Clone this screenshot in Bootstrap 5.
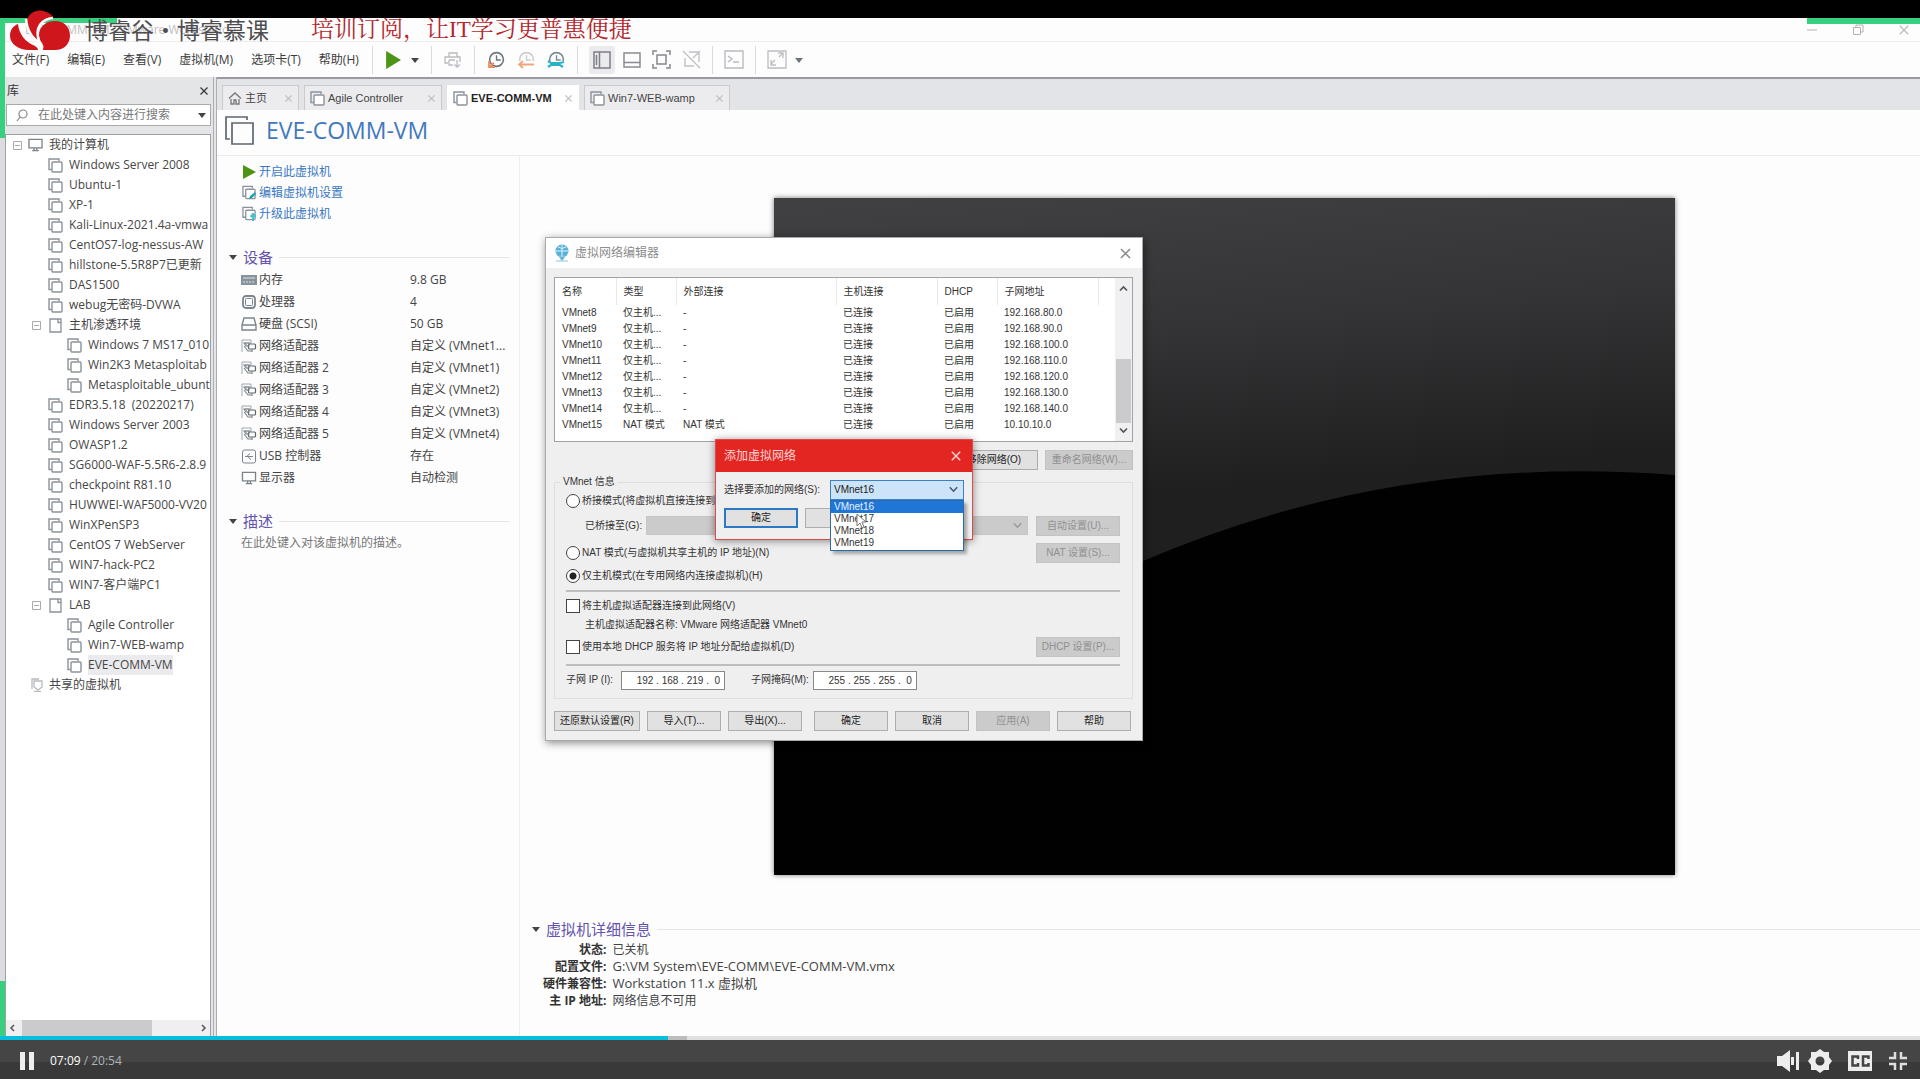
<!DOCTYPE html>
<html lang="zh-CN">
<head>
<meta charset="utf-8">
<meta name="viewport" content="width=device-width, initial-scale=1">
<title>EVE-COMM-VM - VMware Workstation</title>
<link href="https://cdn.jsdelivr.net/npm/bootstrap@5.3.0/dist/css/bootstrap.min.css" rel="stylesheet">
<script defer src="https://cdn.jsdelivr.net/npm/bootstrap@5.3.0/dist/js/bootstrap.bundle.min.js"></script>
<style>
body{font:12px/20px "Open Sans","Noto Sans CJK SC",sans-serif;color:#444;background:#000;overflow-x:hidden}
svg{display:block;flex:none}
button,input,select{font:inherit;color:inherit}
.plain{background:none;border:0;padding:0}
.stage{margin-top:18px;background:#fdfdfd}
.edge{width:5px;flex:none;background:#dcdde0}
.edge-top{height:120px}.edge-bot{height:55px}
.green{background:#37d07e}
.green-tl{left:0;top:0;width:117px;height:5px}
.green-tr{right:0;top:0;width:113px;height:6px}
.titlebar{height:24px;border-bottom:1px solid #ececec;color:#c3bfc1;padding-left:20px}
.winbtns{gap:34px;padding-right:10px}
.brand{left:10px;top:-8px}
.brand-name{left:85px;top:-7px;font:23px/36px "Noto Sans CJK SC",sans-serif;color:#4e4e50}
.slogan{left:311px;top:-3px;font:23px/30px "Liberation Serif","Noto Serif CJK SC","Noto Sans CJK SC",serif;color:#b3272d}
.menubar{height:35px;padding-left:7px}
.menus{gap:18px}
.menubar a{color:#3c3c3c;text-decoration:none}
.tool{gap:12px;margin-left:13px}
.tool-b{gap:11px}
.run-gap{gap:10px}
.vsep{width:1px;height:28px;background:#dcd8dc}
.pressed{background:#ebebee;border-radius:3px;padding:5px 4px}
.lib{width:212px;flex:none;background:#e4e5e7;border-right:4px double #aeadb3}
.lib-head{height:27px;padding:0 4px 0 2px;color:#333}
.lib-search{height:22px;border:1px solid #aaa;background:#fff;padding:0 4px 0 9px;margin:0 2px 8px 1px}
.lib-search input{border:0;outline:0;background:none;width:150px;padding:0 0 0 10px;flex:1;min-width:0}
.lib-search input::placeholder{color:#777;opacity:1}
.treebox{border:1px solid #9fa0a5;border-bottom:0;margin-right:2px;background:#fff;overflow:hidden}
.tree{list-style:none;margin:0;padding:0;white-space:nowrap;color:#464646}
.tree li{height:20px;display:flex;align-items:center;gap:6px;padding-left:42px;overflow:hidden}
.tree .lv0{padding-left:7px;gap:5px}
.tree .lvf{padding-left:26px}
.tree .lvf svg:first-child{margin-right:1px}
.tree .lv2{padding-left:61px}
.tree .shared{padding-left:25px;gap:6px}
.tree .sel span{background:#ebebed}
.hscroll{height:16px;background:#f0eef1;padding:0 3px}
.hthumb{width:130px;height:16px;background:#cbcacd;margin-left:7px}
.tabs{height:33px;background:#e3e4e7;border-top:2px solid #9b9b9f;padding:6px 0 0 5px;gap:5px;font:11px/24px "Liberation Sans","Noto Sans CJK SC",sans-serif}
.tabx{height:25px;background:#ececef;border:1px solid #c9c9ce;border-bottom:0;padding:0 5px;gap:3px;color:#444;border-radius:0}
.tabx.cur{background:#fff;border-color:#fff;font-weight:700;color:#222}
.tabx .x{margin-left:auto}
.t1{width:77px}.t2{width:138px}.t3{width:132px}.t4{width:146px}
.vmhead{height:46px;border-bottom:1px solid #ececec;padding:0 0 5px 8px;gap:12px}
.vmhead h1{font-size:23px;line-height:30px;margin:0;color:#4178be;font-weight:400}
.mid{width:303px;flex:none;border-right:1px solid #eee;padding:5px 9px 0 12px}
.cmds{padding-left:13px;margin-bottom:21px}
.cmds a{display:flex;align-items:center;gap:3px;height:21px;text-decoration:none;color:#3a78c3}
.sec{display:flex;align-items:center;gap:6px;height:24px;margin:0;color:#6454ae;font-size:15px;font-weight:400}
.sec::after{content:"";flex:1;height:1px;background:#e6e6ea}
.dev{margin:0 0 20px;padding-left:12px}
.dev div{display:flex;height:22px;align-items:center}
.dev dt{font-weight:400;width:169px;display:flex;align-items:center;gap:2px}
.dev dd{margin:0;white-space:nowrap}
.desc{padding-left:12px;color:#777}
.rightpane{padding:42px 0 0 0}
.screenwrap{padding-left:8px}
.screen{width:65%;max-width:901px;aspect-ratio:901/677;box-shadow:0 0 5px #777}
.screen svg{width:100%;height:100%}
.detail{padding:42px 0 0 12px}
.detail table{line-height:17px;margin-left:11px}
.detail th{text-align:right;padding:0 6px 0 0;color:#333}
.detail td{padding:0}
.detail .lat{font-size:13px}
/* 虚拟网络编辑器 */
.dlg{left:25px;top:81px;width:598px;background:#f0eff0;border:1px solid #aaa;box-shadow:1px 2px 8px rgba(0,0,0,.45);font:10px/16px "Liberation Sans","Noto Sans CJK SC",sans-serif;color:#333;padding-bottom:9px}
.dlg-title{height:30px;background:#fff;padding:0 10px 0 9px;font-size:12px;color:#8d8d8d;gap:6px}
.dlg-body{padding:9px 9px 0 8px}
.gridbox{height:165px;border:1px solid #a2a2a6;background:#fff}
.nets{width:543px;table-layout:fixed;line-height:16px}
.nets th{font-weight:400;height:27px;border-right:1px solid #e8e8e8}
.nets th,.nets td{padding:0 0 0 7px;white-space:nowrap}
.vscroll{width:17px;background:#f0eff1;padding:7px 0}
.vthumb{height:64px;width:15px;background:#cbcacd}
.wbtn{height:20px;border:1px solid #adadad;background:#e2e1e2;padding:0;line-height:16px;text-align:center;color:#222;width:74px}
.wbtn:disabled{background:#cbcbcc;border-color:#c3c3c3;color:#909090}
.w88{width:88px}.w84{width:84px}.w86{width:86px}
.netinfo{border:1px solid #dedede;margin:4px 0 12px;padding:0 12px 7px 11px}
.netinfo legend{float:none;width:auto;font:inherit;margin:0 0 0 -6px;padding:0 3px;background:#f0eff0}
.ln{display:flex;align-items:center}
.ln label{margin-left:2px}
.ck{appearance:none;width:14px;height:14px;border:1px solid #444;background:#fff;margin:0;flex:none}
.rd{border-radius:50%}
.rd:checked{background:radial-gradient(#222 0 3px,#fff 4px)}
.h22{height:22px}.h20{height:20px}.h27{height:27px}
.ind{padding-left:19px}
.dimsel{appearance:none;height:19px;border:1px solid #c6c6c6;background:#cbcbcc;border-radius:0}
.rule{height:2px;background:#bdbdbf;margin:4px 0 3px}
.ipbox{height:19px;border:1px solid #888;background:#fff;width:104px;padding:0 4px;text-align:right}
.foot{gap:7px}
.foot .gap{margin-right:5px}
/* 添加虚拟网络 */
.addnet{left:169px;top:201px;width:258px;height:101px;background:#f0eff0;border:1px solid #e0494b;box-shadow:0 1px 8px rgba(0,0,0,.45)}
.addnet-title{height:32px;background:#e42623;color:#fbd5d5;font-size:12px;padding:0 10px 0 8px}
.pick{appearance:none;height:20px;width:134px;border:1px solid #3d81c4;background:#cce4f9;border-radius:0;padding:0 3px;color:#222}
.okbtn{border:2px solid #2b78c5}
.picklist{right:8px;top:60px;width:134px;border:1px solid #2b6ca8;background:#fff;box-shadow:3px 3px 3px rgba(0,0,0,.3);line-height:12px;margin:0;padding:0 0 1px;list-style:none}
.picklist li{padding-left:3px}
.picklist .on{background:#1f76d6;color:#e8f3ff}
.cursor{left:140px;top:73px}
.chev{right:6px;top:6px;pointer-events:none}
/* 播放器 */
.prog{height:4px;border-radius:0;background:#dfe0df}
.player{height:39px;background:linear-gradient(#454545 0 22px,#393939 22px);color:#fff;padding:2px 12px 0 20px;font:12px/20px "Open Sans",sans-serif}
.player .tot{color:#aeb4b9}
</style>
</head>
<body class="d-flex flex-column min-vh-100">
<svg width="0" height="0" class="position-absolute" aria-hidden="true">
 <symbol id="vm" viewBox="0 0 15 15"><path d="M3.5 11.5H1V1h10v2" fill="none" stroke="#8b929b" stroke-width="1.4"/><rect x="4" y="4" width="10" height="10" rx="1" fill="#fff" stroke="#8b929b" stroke-width="1.4"/></symbol>
 <symbol id="folder" viewBox="0 0 15 15"><path d="M2 1h8v3.500h3V14H2zM10 1h3v3.500" fill="#fff" stroke="#8b929b" stroke-width="1.300"/></symbol>
 <symbol id="minus" viewBox="0 0 9 9"><path d="M.5.500h8v8h-8zM2 4.500h5" fill="#fff" stroke="#aaa"/></symbol>
 <symbol id="x" viewBox="0 0 10 10"><path d="M1.500 1.500l7 7M8.500 1.500l-7 7" fill="none" stroke="currentColor" stroke-width="1.200"/></symbol>
 <symbol id="car" viewBox="0 0 8 6"><path d="M0 1h8L4 6z" fill="currentColor"/></symbol>
 <symbol id="play" viewBox="0 0 14 14"><path d="M1 0l13 7-13 7z" fill="#4b9414"/></symbol>
 <symbol id="net" viewBox="0 0 16 15"><path d="M1 13V1h9v3H4l4 5" fill="none" stroke="#a1a7ad"/><rect x="7.500" y="5" width="7" height="5" rx="1" fill="#fff" stroke="#5c6670" stroke-width="1.200"/><path d="M11 10v3M3 4h5v3H5zM3 7l4 5h4" fill="none" stroke="#7b848c" stroke-width="1.100"/></symbol>
 <symbol id="mon" viewBox="0 0 17 15"><path d="M1.500 1.500h14v9h-14zM5 13.500h7M7 11v2M10 11v2" fill="none" stroke="#7b828a" stroke-width="1.400"/></symbol>
 <symbol id="clock" viewBox="0 0 17 17"><circle cx="9" cy="8" r="6.500" fill="none" stroke="currentColor" stroke-width="1.500"/><path d="M9 4v4.500h4" fill="none" stroke="currentColor" stroke-width="1.300"/></symbol>
 <symbol id="down" viewBox="0 0 8 6"><path d="M.7 1L4 4.500 7.300 1" fill="none" stroke="currentColor" stroke-width="1.300"/></symbol>
</svg>

<main class="stage flex-grow-1 d-flex position-relative">
 <div class="edge d-flex flex-column justify-content-between"><i class="edge-top green"></i><i class="edge-bot green"></i></div>
 <div class="flex-grow-1 d-flex flex-column">
  <div class="titlebar d-flex align-items-center justify-content-between"><span>EVE-COMM-VM - VMware Workstation</span>
   <div class="winbtns d-flex align-items-center"><button class="plain" aria-label="最小化"><svg width="12" height="12"><path d="M1 6h10" stroke="#b9adad"/></svg></button><button class="plain" aria-label="还原"><svg width="12" height="12"><path d="M1.500 3.500h7v7h-7zM4 3V1h7v7H9" fill="none" stroke="#b9adad"/></svg></button><button class="plain" aria-label="关闭"><svg width="12" height="12"><use href="#x"/></svg></button></div>
  </div>
  <nav class="menubar d-flex align-items-center">
   <div class="menus d-flex"><a href="#">文件(F)</a><a href="#">编辑(E)</a><a href="#">查看(V)</a><a href="#">虚拟机(M)</a><a href="#">选项卡(T)</a><a href="#">帮助(H)</a></div>
   <div class="tool d-flex align-items-center">
    <i class="vsep"></i>
    <button class="plain d-flex align-items-center run-gap" aria-label="开启"><svg width="16" height="18" viewBox="0 0 14 14" preserveAspectRatio="none"><use href="#play"/></svg><svg width="8" height="6"><use href="#car"/></svg></button>
    <i class="vsep"></i>
    <button class="plain" aria-label="发送"><svg width="18" height="18" fill="none" stroke="#b9bcc2" stroke-width="1.300"><path d="M5 6V2h8v4M4 12H1V6h15v5M5 9h6M5 9v5h4M13 9v7M10.500 13.500L13 16l3-2.500"/></svg></button>
    <i class="vsep"></i>
    <button class="plain text-secondary" aria-label="快照"><svg width="18" height="18"><use href="#clock"/><path d="M2 10v6h6M2 16l5-4" fill="none" stroke="#eb8f60" stroke-width="1.800"/></svg></button>
    <button class="plain" aria-label="恢复快照"><svg width="18" height="18"><g color="#ccc"><use href="#clock"/></g><path d="M0 10h18v8H0z" fill="#fff"/><path d="M2 13.500h15M6 10l-4 3.500L6 17" fill="none" stroke="#f2a47c" stroke-width="1.800"/></svg></button>
    <button class="plain" aria-label="管理快照"><svg width="18" height="18"><g color="#7d8b97"><use href="#clock"/></g><path d="M0 10h18v8H0z" fill="#fff"/><path d="M1 10l3 2h9l4-1M1 16l3-2h9l3 2" fill="none" stroke="#29b2c6" stroke-width="2.200"/></svg></button>
    <div class="tool-b d-flex align-items-center">
    <i class="vsep"></i>
    <div class="d-flex align-items-center gap-2">
    <button class="plain pressed" aria-label="显示库"><svg width="18" height="18" fill="none" stroke="#7d7f88" stroke-width="1.500"><path d="M1 1h16v16H1zM6.500 1v16M3.500 4v10"/></svg></button>
    <button class="plain" aria-label="缩略图"><svg width="18" height="18" fill="none" stroke="#8a8c94" stroke-width="1.500"><path d="M1 2h16v14H1zM1 11.500h16"/></svg></button></div>
    <button class="plain" aria-label="全屏"><svg width="19" height="19" fill="none" stroke="#85878f" stroke-width="1.500"><path d="M1 5V1h4M14 1h4v4M18 14v4h-4M5 18H1v-4M5 5h9v9H5z"/></svg></button>
    <button class="plain" aria-label="Unity"><svg width="19" height="19" fill="none" stroke="#c0c1c6" stroke-width="1.400"><path d="M1 1l17 17M7 2h10v10M12 16H3V8M11 8l7-7"/></svg></button>
    <i class="vsep"></i>
    <button class="plain" aria-label="控制台"><svg width="20" height="19" fill="none" stroke="#b9bbc1" stroke-width="1.400"><path d="M1 1h18v17H1zM4 6l4 3-4 3M9 12h6"/></svg></button>
    <i class="vsep"></i>
    <button class="plain d-flex align-items-center gap-2 text-secondary" aria-label="自由拉伸"><svg width="20" height="19" fill="none" stroke="#bcbdc2" stroke-width="1.300"><path d="M1 1h18v17H1zM4 14l4-4M12 7l4-4M4 10v5h5M11 3h5v5"/></svg><svg width="8" height="6"><use href="#car"/></svg></button>
    </div>
   </div>
  </nav>

  <div class="flex-grow-1 d-flex">
   <aside class="lib d-flex flex-column">
    <div class="lib-head d-flex justify-content-between align-items-center"><span>库</span><button class="plain" aria-label="关闭库"><svg width="10" height="10"><use href="#x"/></svg></button></div>
    <div class="lib-search d-flex align-items-center"><svg width="12" height="13" fill="none" stroke="#888" stroke-width="1.200"><circle cx="7" cy="5" r="4"/><path d="M4 8l-3 4"/></svg><input aria-label="搜索" placeholder="在此处键入内容进行搜索"><svg width="8" height="6"><use href="#car"/></svg></div>
    <div class="treebox flex-grow-1 d-flex flex-column justify-content-between">
    <ul class="tree">
     <li class="lv0"><svg width="9" height="9"><use href="#minus"/></svg><svg width="17" height="14"><use href="#mon"/></svg><span>我的计算机</span></li>
     <li><svg width="15" height="15"><use href="#vm"/></svg><span>Windows Server 2008</span></li>
     <li><svg width="15" height="15"><use href="#vm"/></svg><span>Ubuntu-1</span></li>
     <li><svg width="15" height="15"><use href="#vm"/></svg><span>XP-1</span></li>
     <li><svg width="15" height="15"><use href="#vm"/></svg><span>Kali-Linux-2021.4a-vmwa</span></li>
     <li><svg width="15" height="15"><use href="#vm"/></svg><span>CentOS7-log-nessus-AW</span></li>
     <li><svg width="15" height="15"><use href="#vm"/></svg><span>hillstone-5.5R8P7已更新</span></li>
     <li><svg width="15" height="15"><use href="#vm"/></svg><span>DAS1500</span></li>
     <li><svg width="15" height="15"><use href="#vm"/></svg><span>webug无密码-DVWA</span></li>
     <li class="lvf"><svg width="9" height="9"><use href="#minus"/></svg><svg width="15" height="15"><use href="#folder"/></svg><span>主机渗透环境</span></li>
     <li class="lv2"><svg width="15" height="15"><use href="#vm"/></svg><span>Windows 7 MS17_010</span></li>
     <li class="lv2"><svg width="15" height="15"><use href="#vm"/></svg><span>Win2K3 Metasploitab</span></li>
     <li class="lv2"><svg width="15" height="15"><use href="#vm"/></svg><span>Metasploitable_ubunt</span></li>
     <li><svg width="15" height="15"><use href="#vm"/></svg><span>EDR3.5.18&nbsp; (20220217)</span></li>
     <li><svg width="15" height="15"><use href="#vm"/></svg><span>Windows Server 2003</span></li>
     <li><svg width="15" height="15"><use href="#vm"/></svg><span>OWASP1.2</span></li>
     <li><svg width="15" height="15"><use href="#vm"/></svg><span>SG6000-WAF-5.5R6-2.8.9</span></li>
     <li><svg width="15" height="15"><use href="#vm"/></svg><span>checkpoint R81.10</span></li>
     <li><svg width="15" height="15"><use href="#vm"/></svg><span>HUWWEI-WAF5000-VV20</span></li>
     <li><svg width="15" height="15"><use href="#vm"/></svg><span>WinXPenSP3</span></li>
     <li><svg width="15" height="15"><use href="#vm"/></svg><span>CentOS 7 WebServer</span></li>
     <li><svg width="15" height="15"><use href="#vm"/></svg><span>WIN7-hack-PC2</span></li>
     <li><svg width="15" height="15"><use href="#vm"/></svg><span>WIN7-客户端PC1</span></li>
     <li class="lvf"><svg width="9" height="9"><use href="#minus"/></svg><svg width="15" height="15"><use href="#folder"/></svg><span>LAB</span></li>
     <li class="lv2"><svg width="15" height="15"><use href="#vm"/></svg><span>Agile Controller</span></li>
     <li class="lv2"><svg width="15" height="15"><use href="#vm"/></svg><span>Win7-WEB-wamp</span></li>
     <li class="lv2 sel"><svg width="15" height="15"><use href="#vm"/></svg><span>EVE-COMM-VM</span></li>
     <li class="shared"><svg width="12" height="14" fill="none" stroke="#b5bac0" stroke-width="1.300"><path d="M1 11V1h7M3 3h8v6l-4 3-4-3zM3 13.300h7"/></svg><span>共享的虚拟机</span></li>
    </ul>
    <div class="hscroll d-flex align-items-center"><svg width="6" height="8"><path d="M5 1L2 4l3 3" fill="none" stroke="#555" stroke-width="1.500"/></svg><div class="hthumb"></div><svg width="6" height="8" class="ms-auto"><path d="M1 1l3 3-3 3" fill="none" stroke="#555" stroke-width="1.500"/></svg></div>
    </div>
   </aside>

   <section class="flex-grow-1 d-flex flex-column">
    <div class="tabs d-flex">
     <button class="tabx t1 d-flex align-items-center"><svg width="14" height="14" fill="none" stroke="#777" stroke-width="1.300"><path d="M1 7.500L7 2l6 5.500M3 8v5h3V9h2v4h3V8"/></svg><span>主页</span><svg class="x" width="9" height="9" color="#bbb"><use href="#x"/></svg></button>
     <button class="tabx t2 d-flex align-items-center"><svg width="15" height="15"><use href="#vm"/></svg><span>Agile Controller</span><svg class="x" width="9" height="9" color="#bbb"><use href="#x"/></svg></button>
     <button class="tabx cur t3 d-flex align-items-center"><svg width="15" height="15"><use href="#vm"/></svg><span>EVE-COMM-VM</span><svg class="x" width="9" height="9" color="#bbb"><use href="#x"/></svg></button>
     <button class="tabx t4 d-flex align-items-center"><svg width="15" height="15"><use href="#vm"/></svg><span>Win7-WEB-wamp</span><svg class="x" width="9" height="9" color="#bbb"><use href="#x"/></svg></button>
    </div>
    <div class="vmhead d-flex align-items-center"><svg width="29" height="29" fill="none" stroke="#5d6670" stroke-width="1.700"><path d="M5 23H1V1h21v3"/><path d="M7 7h21v21H7z"/></svg><h1>EVE-COMM-VM</h1></div>
    <div class="flex-grow-1 d-flex position-relative">
     <div class="mid">
      <div class="cmds">
       <a href="#"><svg width="14" height="14"><use href="#play"/></svg>开启此虚拟机</a>
       <a href="#"><svg width="14" height="15"><use href="#vm"/><path d="M7 14l1-3 5-4 1 2-4 4z" fill="#1ea4b5"/></svg>编辑虚拟机设置</a>
       <a href="#"><svg width="14" height="15"><use href="#vm"/><path d="M11 15V9M8.500 11L11 8l3 3" fill="none" stroke="#45bfca" stroke-width="2"/></svg>升级此虚拟机</a>
      </div>
      <h2 class="sec"><svg width="8" height="6" color="#444"><use href="#car"/></svg>设备</h2>
      <dl class="dev">
       <div><dt><svg width="16" height="12"><path d="M0 1h16v10H0z" fill="#87929b"/><path d="M2 4h12M2 8h2m1 0h2m1 0h2m1 0h2" stroke="#dfe4e8"/></svg>内存</dt><dd>9.8 GB</dd></div>
       <div><dt><svg width="16" height="16" fill="none" stroke="#7b858e" stroke-width="1.800"><rect x="2" y="2" width="12" height="12" rx="3"/><rect x="4.500" y="4.500" width="7" height="7" rx="1" stroke-width="1"/></svg>处理器</dt><dd>4</dd></div>
       <div><dt><svg width="16" height="14" fill="none" stroke="#7b858e" stroke-width="1.400"><path d="M1 8l2-7h10l2 7v5H1zM1 8h14"/></svg>硬盘 (SCSI)</dt><dd>50 GB</dd></div>
       <div><dt><svg width="16" height="15"><use href="#net"/></svg>网络适配器</dt><dd>自定义 (VMnet1...</dd></div>
       <div><dt><svg width="16" height="15"><use href="#net"/></svg>网络适配器 2</dt><dd>自定义 (VMnet1)</dd></div>
       <div><dt><svg width="16" height="15"><use href="#net"/></svg>网络适配器 3</dt><dd>自定义 (VMnet2)</dd></div>
       <div><dt><svg width="16" height="15"><use href="#net"/></svg>网络适配器 4</dt><dd>自定义 (VMnet3)</dd></div>
       <div><dt><svg width="16" height="15"><use href="#net"/></svg>网络适配器 5</dt><dd>自定义 (VMnet4)</dd></div>
       <div><dt><svg width="16" height="15" fill="none" stroke="#7b858e"><rect x="1.500" y="1" width="13" height="13" rx="2"/><path d="M4 7.500h8M6 7.500l2-2.500h1M7 7.500l2 2.500h1"/></svg>USB 控制器</dt><dd>存在</dd></div>
       <div><dt><svg width="16" height="14"><use href="#mon"/></svg>显示器</dt><dd>自动检测</dd></div>
      </dl>
      <h2 class="sec"><svg width="8" height="6" color="#444"><use href="#car"/></svg>描述</h2>
      <div class="desc">在此处键入对该虚拟机的描述。</div>
     </div>

     <div class="rightpane flex-grow-1 position-relative">
      <div class="screenwrap d-flex justify-content-center"><div class="screen"><svg viewBox="0 0 901 677" preserveAspectRatio="none"><defs><linearGradient id="gl" x1="0" y1="0" x2=".15" y2="1"><stop offset="0" stop-color="#414143"/><stop offset=".3" stop-color="#343436"/><stop offset=".6" stop-color="#1f1f20"/></linearGradient></defs><path d="M0 0h901v677H0z" fill="#010101"/><path d="M0 0h901v277Q620 255 369 363Q170 450 0 540z" fill="url(#gl)"/></svg></div></div>
      <div class="detail">
       <h2 class="sec"><svg width="8" height="6" color="#444"><use href="#car"/></svg>虚拟机详细信息</h2>
       <table><tr><th>状态:</th><td>已关机</td></tr><tr><th>配置文件:</th><td class="lat">G:\VM System\EVE-COMM\EVE-COMM-VM.vmx</td></tr><tr><th>硬件兼容性:</th><td class="lat">Workstation 11.x 虚拟机</td></tr><tr><th>主 IP 地址:</th><td>网络信息不可用</td></tr></table>
      </div>

      <div class="dlg position-absolute" role="dialog" aria-label="虚拟网络编辑器">
       <div class="dlg-title d-flex align-items-center"><svg width="14" height="18"><circle cx="7" cy="7" r="6.500" fill="#55b1d8"/><path d="M4 12l3 5 3-5zM1 17h12" fill="#55b1d8" stroke="#8cc8dd"/><path d="M1 7h12M7 1v12M3 3q4 3 8 0" fill="none" stroke="#def2fa"/></svg><span>虚拟网络编辑器</span><button class="plain ms-auto" aria-label="关闭"><svg width="13" height="13"><use href="#x"/></svg></button></div>
       <div class="dlg-body">
        <div class="gridbox d-flex justify-content-between">
         <table class="nets align-self-start"><colgroup><col width="61"><col width="60"><col width="160"><col width="101"><col width="60"><col width="101"></colgroup>
          <thead><tr><th>名称</th><th>类型</th><th>外部连接</th><th>主机连接</th><th>DHCP</th><th>子网地址</th></tr></thead>
          <tbody>
          <tr><td>VMnet8</td><td>仅主机...</td><td>-</td><td>已连接</td><td>已启用</td><td>192.168.80.0</td></tr>
          <tr><td>VMnet9</td><td>仅主机...</td><td>-</td><td>已连接</td><td>已启用</td><td>192.168.90.0</td></tr>
          <tr><td>VMnet10</td><td>仅主机...</td><td>-</td><td>已连接</td><td>已启用</td><td>192.168.100.0</td></tr>
          <tr><td>VMnet11</td><td>仅主机...</td><td>-</td><td>已连接</td><td>已启用</td><td>192.168.110.0</td></tr>
          <tr><td>VMnet12</td><td>仅主机...</td><td>-</td><td>已连接</td><td>已启用</td><td>192.168.120.0</td></tr>
          <tr><td>VMnet13</td><td>仅主机...</td><td>-</td><td>已连接</td><td>已启用</td><td>192.168.130.0</td></tr>
          <tr><td>VMnet14</td><td>仅主机...</td><td>-</td><td>已连接</td><td>已启用</td><td>192.168.140.0</td></tr>
          <tr><td>VMnet15</td><td>NAT 模式</td><td>NAT 模式</td><td>已连接</td><td>已启用</td><td>10.10.10.0</td></tr>
          </tbody></table>
         <div class="vscroll d-flex flex-column align-items-center"><svg width="9" height="7"><path d="M1 5.500L4.500 2 8 5.500" fill="none" stroke="#555" stroke-width="1.700"/></svg><div class="vthumb mt-auto mb-1"></div><svg width="9" height="7"><path d="M1 1.500L4.500 5 8 1.500" fill="none" stroke="#555" stroke-width="1.700"/></svg></div>
        </div>
        <div class="d-flex justify-content-end foot pt-2"><button class="wbtn w88">添加网络(E)...</button><button class="wbtn w88">移除网络(O)</button><button class="wbtn w88" disabled>重命名网络(W)...</button></div>
        <fieldset class="netinfo"><legend>VMnet 信息</legend>
         <div class="ln h22"><input class="ck rd" type="radio" name="m" id="m1"><label for="m1">桥接模式(将虚拟机直接连接到外部网络)(B)</label></div>
         <div class="ln h27 ind"><label for="br" class="ms-0 me-1">已桥接至(G):</label><div class="flex-grow-1 position-relative d-flex me-2"><select id="br" class="dimsel w-100" disabled><option></option></select><svg class="chev position-absolute" width="9" height="7" color="#999"><use href="#down"/></svg></div><button class="wbtn w84" disabled>自动设置(U)...</button></div>
         <div class="ln h27 justify-content-between"><div class="ln"><input class="ck rd" type="radio" name="m" id="m2"><label for="m2">NAT 模式(与虚拟机共享主机的 IP 地址)(N)</label></div><button class="wbtn w84" disabled>NAT 设置(S)...</button></div>
         <div class="ln h20"><input class="ck rd" type="radio" name="m" id="m3" checked><label for="m3">仅主机模式(在专用网络内连接虚拟机)(H)</label></div>
         <div class="rule"></div>
         <div class="ln h22"><input class="ck" type="checkbox" id="c1"><label for="c1">将主机虚拟适配器连接到此网络(V)</label></div>
         <div class="ind">主机虚拟适配器名称: VMware 网络适配器 VMnet0</div>
         <div class="ln h27 justify-content-between"><div class="ln"><input class="ck" type="checkbox" id="c2"><label for="c2">使用本地 DHCP 服务将 IP 地址分配给虚拟机(D)</label></div><button class="wbtn w84" disabled>DHCP 设置(P)...</button></div>
         <div class="rule"></div>
         <div class="ln h22"><label for="ip" class="ms-0 me-2">子网 IP (I):</label><input class="ipbox me-4" id="ip" value="192 . 168 . 219 .  0"><label for="mask" class="me-1">子网掩码(M):</label><input class="ipbox" id="mask" value="255 . 255 . 255 .  0"></div>
        </fieldset>
        <div class="d-flex foot"><button class="wbtn w86">还原默认设置(R)</button><button class="wbtn">导入(T)...</button><button class="wbtn gap">导出(X)...</button><button class="wbtn">确定</button><button class="wbtn">取消</button><button class="wbtn" disabled>应用(A)</button><button class="wbtn">帮助</button></div>
       </div>
       <div class="addnet position-absolute" role="dialog" aria-label="添加虚拟网络">
        <div class="addnet-title d-flex align-items-center justify-content-between"><span>添加虚拟网络</span><button class="plain" aria-label="关闭"><svg width="12" height="12"><use href="#x"/></svg></button></div>
        <div class="d-flex align-items-center justify-content-between position-relative pt-2 ps-2"><label for="pk">选择要添加的网络(S):</label><div class="position-relative d-flex me-2"><select id="pk" class="pick"><option>VMnet16</option><option>VMnet17</option><option>VMnet18</option><option>VMnet19</option></select><svg class="chev position-absolute" width="9" height="7" color="#456"><use href="#down"/></svg></div></div>
        <div class="d-flex foot pt-2 ps-2"><button class="wbtn okbtn">确定</button><button class="wbtn text-end" aria-label="取消"></button></div>
        <ul class="picklist position-absolute"><li class="on">VMnet16</li><li>VMnet17</li><li>VMnet18</li><li>VMnet19</li></ul>
        <svg class="cursor position-absolute" width="12" height="17"><path d="M1 1v12l3-3 2 5 2-1-2-5h4z" fill="#fff" stroke="#777"/></svg>
       </div>
      </div>
     </div>
    </div>
   </section>
  </div>
 </div>
 <i class="green green-tl position-absolute"></i><i class="green green-tr position-absolute"></i>
 <svg class="brand position-absolute" width="60" height="40"><path d="M16 12C19 2 27-1 33 1c5 1 8 3 10 6-9 2-16 9-16 18 0 4 1 6 2 8-8-4-12-12-13-21z" fill="#cf161d"/><path d="M8 14c1 10 7 18 17 22 2 1 3 3 3 4h-9C9 40 0 34 0 26c0-6 3-10 8-12z" fill="#cf161d"/><path d="M45 11c9 0 15 6 15 14.500S54 40 45 40H33c0-2 1-3 0-5-3-3-4-6-4-10 0-8 7-14 16-14z" fill="#cf161d"/><path d="M16 9c1 11 6 20 16 25" fill="none" stroke="#fff" stroke-width="2.500"/><path d="M43 8c-11 1-17 9-15 19 1 5 4 8 3 13" fill="none" stroke="#fff" stroke-width="2.500"/></svg>
 <span class="brand-name position-absolute text-nowrap">博睿谷·博睿慕课</span>
 <span class="slogan position-absolute text-nowrap">培训订阅，让IT学习更普惠便捷</span>
</main>
<div class="progress-stacked prog"><div class="progress-bar" style="width:34.8%;background:#05bedb"></div><div class="progress-bar" style="width:1%;background:#bcbcbc"></div></div>
<footer class="player d-flex align-items-center">
 <button class="plain" aria-label="暂停"><svg width="14" height="18"><path d="M0 0h5v18H0zM9 0h5v18H9z" fill="#eee"/></svg></button>
 <div class="ms-3"><span>07:09</span><span class="tot"> / 20:54</span></div>
 <div class="ms-auto d-flex align-items-center">
  <button class="plain me-2" aria-label="音量"><svg width="24" height="22" fill="#ecedec"><path d="M1 6h5l8-6v22l-8-6H1zM15 7h3v8h-3zM20 2h3v18h-3z"/></svg></button>
  <button class="plain me-3" aria-label="设置"><svg width="24" height="24"><path fill="#ecedec" fill-rule="evenodd" d="M12 0l4 3h5v5l3 4-3 4v5h-5l-4 3-4-3H3v-5l-3-4 3-4V3h5zM12 7.500a4.500 4.500 0 100 9 4.500 4.500 0 000-9z"/></svg></button>
  <button class="plain me-3" aria-label="字幕"><svg width="24" height="20"><path d="M0 0h24v20H0z" fill="#ecedec"/><path d="M10 8V5.500H4.500v9H10V12M20.500 8V5.500H15v9h5.500V12" fill="none" stroke="#444" stroke-width="2.500"/></svg></button>
  <button class="plain" aria-label="退出全屏"><svg width="20" height="20" fill="none" stroke="#dedfde" stroke-width="2.500"><path d="M1 7h6V1M13 1v6h6M19 13h-6v6M7 19v-6H1"/></svg></button>
 </div>
</footer>
</body>
</html>
